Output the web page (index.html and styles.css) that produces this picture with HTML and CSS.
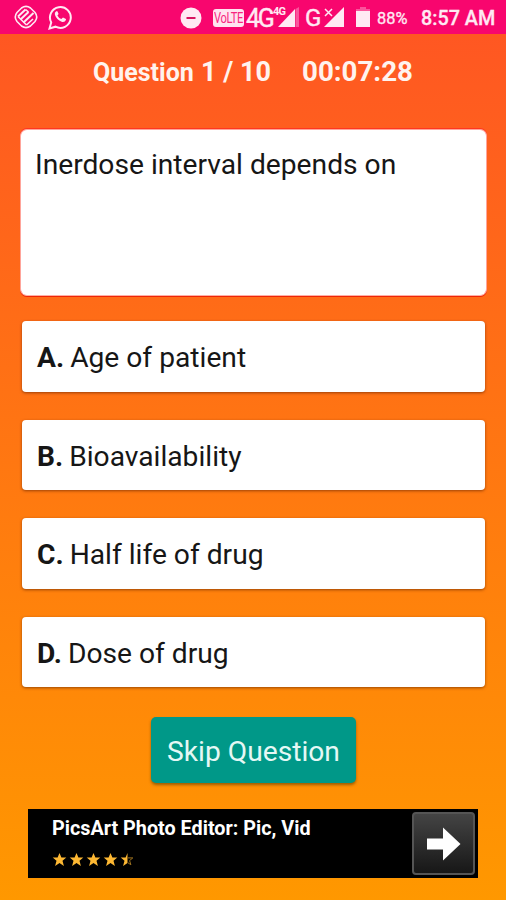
FILE: index.html
```html
<!DOCTYPE html>
<html lang="en">
<head>
<meta charset="utf-8">
<title>Quiz</title>
<link rel="stylesheet" href="styles.css">
</head>
<body>
<header class="status">
  <svg class="ic-app" width="24" height="24" viewBox="0 0 24 24" fill="none" stroke="currentColor" stroke-width="1.6"><path d="M7.500 3Q12-.2 16.500 3L21 7.500Q24.500 12 21 16.500L16.500 21Q12 24.200 7.500 21L3 16.500Q-.5 12 3 7.500Z"/><path stroke-width="2" d="M4 11.500L11.500 4.500M6.500 14.500L14.500 7M9.500 17.500L19.500 8"/><path d="M4 11.500L12.500 20M11.500 4.500L14.500 7M12.500 20L19 14"/></svg>
  <svg class="ic-chat" width="24" height="26" viewBox="0 0 24 26"><path d="M1.500 24.500l1.700-6.100A10.400 10.400 0 1 1 7.500 22.700Z" fill="none" stroke="currentColor" stroke-width="2"/><path d="M8.200 7.200q-2 1-1.300 3.600 1.700 5 6.700 7 3.200.8 4.300-1.700l.1-1.200-3-1.500-1.700 1.700q-2.700-1.200-3.900-3.700l1.200-1.500-1.200-2.700Z" fill="currentColor"/></svg>
  <svg class="ic-dnd" width="22" height="22" viewBox="0 0 22 22"><circle cx="11" cy="11" r="10.500" fill="currentColor"/><path d="M6.500 11h9" stroke="#d81460" stroke-width="2"/></svg>
  <span class="volte"><span>VoLTE</span></span>
  <span class="net net-4g">4G</span>
  <span class="signal signal-4g">
    <svg width="27" height="20" viewBox="0 0 27 20"><path d="M5 20L22 2V20Z" fill="currentColor"/><path d="M22.500 2L26 0V20H22.500Z" fill="currentColor" opacity=".35"/></svg>
    <span class="tag">4G</span>
  </span>
  <span class="net net-g">G</span>
  <svg class="ic-nosignal" width="20" height="20" viewBox="0 0 20 20"><path d="M0 20L20 0V20Z" fill="currentColor"/><path d="M1 2l7 7M8 2l-7 7" stroke="currentColor" stroke-width="1.500"/></svg>
  <svg class="ic-battery" width="14" height="20" viewBox="0 0 14 20"><path d="M4 0h6v2h4v2H0V2h4Z" fill="currentColor" opacity=".35"/><path d="M0 4h14v16H0Z" fill="currentColor"/></svg>
  <span class="percent">88%</span>
  <span class="clock">8:57 AM</span>
</header>
<main class="quiz">
  <div class="progress"><span class="label">Question</span><span class="count">1 / 10</span><span class="timer">00:07:28</span></div>
  <section class="question">Inerdose interval depends on</section>
  <div class="answers">
    <div class="answer"><b>A.</b><span>Age of patient</span></div>
    <div class="answer"><b>B.</b><span>Bioavailability</span></div>
    <div class="answer"><b>C.</b><span>Half life of drug</span></div>
    <div class="answer"><b>D.</b><span>Dose of drug</span></div>
  </div>
  <button class="skip">Skip Question</button>
  <aside class="ad">
    <div class="ad-copy">
      <div class="ad-title">PicsArt Photo Editor: Pic, Vid</div>
      <svg class="stars" width="82" height="14" viewBox="0 0 82 14" fill="#fdb833">
        <defs><path id="star" d="M6.500 0l1.900 4.500h4.900l-3.800 3.200 1.400 5.300-4.400-2.900-4.400 2.900 1.400-5.300L-.3 4.500h4.900Z"/></defs>
        <use href="#star"/><use href="#star" x="17"/><use href="#star" x="34"/><use href="#star" x="51"/>
        <path d="M74.500 0V10.100L70.100 13 71.500 7.700 67.700 4.500H72.600Z"/>
        <path d="M75 4.900h4.800l-3.200 2.700 1.300 4.200-2.900-2" fill="none" stroke="#9b701f" stroke-width="1"/>
      </svg>
    </div>
    <div class="ad-go"><svg width="34" height="34" viewBox="0 0 34 34"><path d="M0 11.500H16V0.500L33.500 17L16 33.500V22.500H0Z" fill="#fff"/></svg></div>
  </aside>
</main>
</body>
</html>
```
FILE: styles.css
```css
* { box-sizing: border-box; }
body {
  margin: 0;
  height: 900px;
  overflow: hidden;
  display: flex;
  flex-direction: column;
  font-family: Roboto, "Liberation Sans", sans-serif;
  background: linear-gradient(#ff5722 34px, #ff9800 900px);
}
.status {
  flex: none;
  height: 34px;
  display: flex;
  align-items: flex-start;
  background: #f8066e;
  color: #ffe9f3;
  white-space: nowrap;
}
.status > * { flex: none; }
.ic-app { margin: 5px 0 0 14px; }
.ic-chat { margin: 4px 0 0 10px; }
.ic-dnd { margin: 7px 0 0 108px; }
.volte {
  width: 31px;
  height: 18px;
  margin: 9px 0 0 11px;
  border-radius: 3px;
  background: #ffe4f0;
  color: #f8277f;
  font: 15px/18px Roboto, sans-serif;
}
.volte span { display: block; width: 40px; margin-left: 1px; transform: scaleX(.74); transform-origin: left; letter-spacing: -0.4px; }
.net { font-size: 25px; line-height: 34px; margin-top: 2px; -webkit-text-stroke: .4px currentColor; }
.net-4g { width: 26px; margin-left: 2px; letter-spacing: -2.2px; }
.signal { position: relative; width: 27px; height: 20px; margin: 7px 0 0 1px; }
.signal svg { display: block; }
.tag { position: absolute; left: 0; top: -1px; font: bold 11px/12px Roboto, sans-serif; letter-spacing: -0.7px; }
.net-g { width: 16px; margin: 1px 0 0 5px; font-size: 24px; }
.ic-nosignal { margin: 7px 0 0 3px; }
.ic-battery { margin: 7px 0 0 12px; }
.percent { width: 32px; margin: 2px 0 0 7px; font-size: 16.4px; line-height: 34px; -webkit-text-stroke: .3px currentColor; }
.clock { margin: 2px 0 0 12px; font-size: 19.8px; font-weight: 500; line-height: 34px; -webkit-text-stroke: .3px currentColor; }
.quiz { flex: 1; display: flex; flex-direction: column; }
.progress {
  display: flex;
  align-items: baseline;
  height: 95px;
  padding: 21px 0 0 93px;
  color: #fff3ee;
  font-size: 27px;
  font-weight: bold;
  line-height: 34px;
  white-space: nowrap;
}
.label { width: 108px; font-size: 25px; }
.count { width: 101px; }
.timer { font-size: 27.7px; }
.question {
  width: 467px;
  height: 167px;
  margin-left: 20px;
  padding: 18px 14px;
  border: 1px solid #ffa59b;
  border-bottom-color: #ffb0a6;
  border-radius: 7px;
  background: #fff;
  box-shadow: 0 1px 0 #ee2608, 0 -1px 0 #ff3720;
  color: #161616;
  font-size: 28.2px;
  line-height: 33px;
  white-space: nowrap;
}
.answers { display: grid; gap: 28px; margin: 25px 21px 0 22px; }
.answer {
  display: flex;
  align-items: center;
  height: 70.5px;
  padding: 4px 0 0 15px;
  border-radius: 4px;
  background: #fff;
  box-shadow: 0 1px 3px rgba(100, 35, 0, .65);
  color: #161616;
  font-size: 28.2px;
  line-height: 34px;
}
.answer b { margin-right: 6px; }
.skip {
  width: 205px;
  height: 66px;
  margin: 30px 0 0 151px;
  padding: 4px 0 0;
  border: 0;
  border-radius: 5px;
  background: #009888;
  box-shadow: 0 2px 3px rgba(90, 60, 0, .6);
  color: #e5f8f5;
  font: 28.2px/34px Roboto, sans-serif;
  white-space: nowrap;
}
.ad {
  display: flex;
  justify-content: space-between;
  width: 450px;
  height: 69px;
  margin: 26px 0 0 28px;
  padding-right: 3px;
  background: #000;
}
.ad-copy { padding: 8px 0 0 24px; }
.ad-title { color: #fff; font-size: 19.8px; font-weight: bold; line-height: 24px; white-space: nowrap; }
.stars { display: block; margin: 12px 0 0 1px; overflow: visible; }
.ad-go {
  display: flex;
  align-items: center;
  justify-content: center;
  width: 63px;
  height: 63px;
  margin-top: 3px;
  border: 2px solid #555;
  border-radius: 4px;
  background: linear-gradient(#444, #171717);
}
```
